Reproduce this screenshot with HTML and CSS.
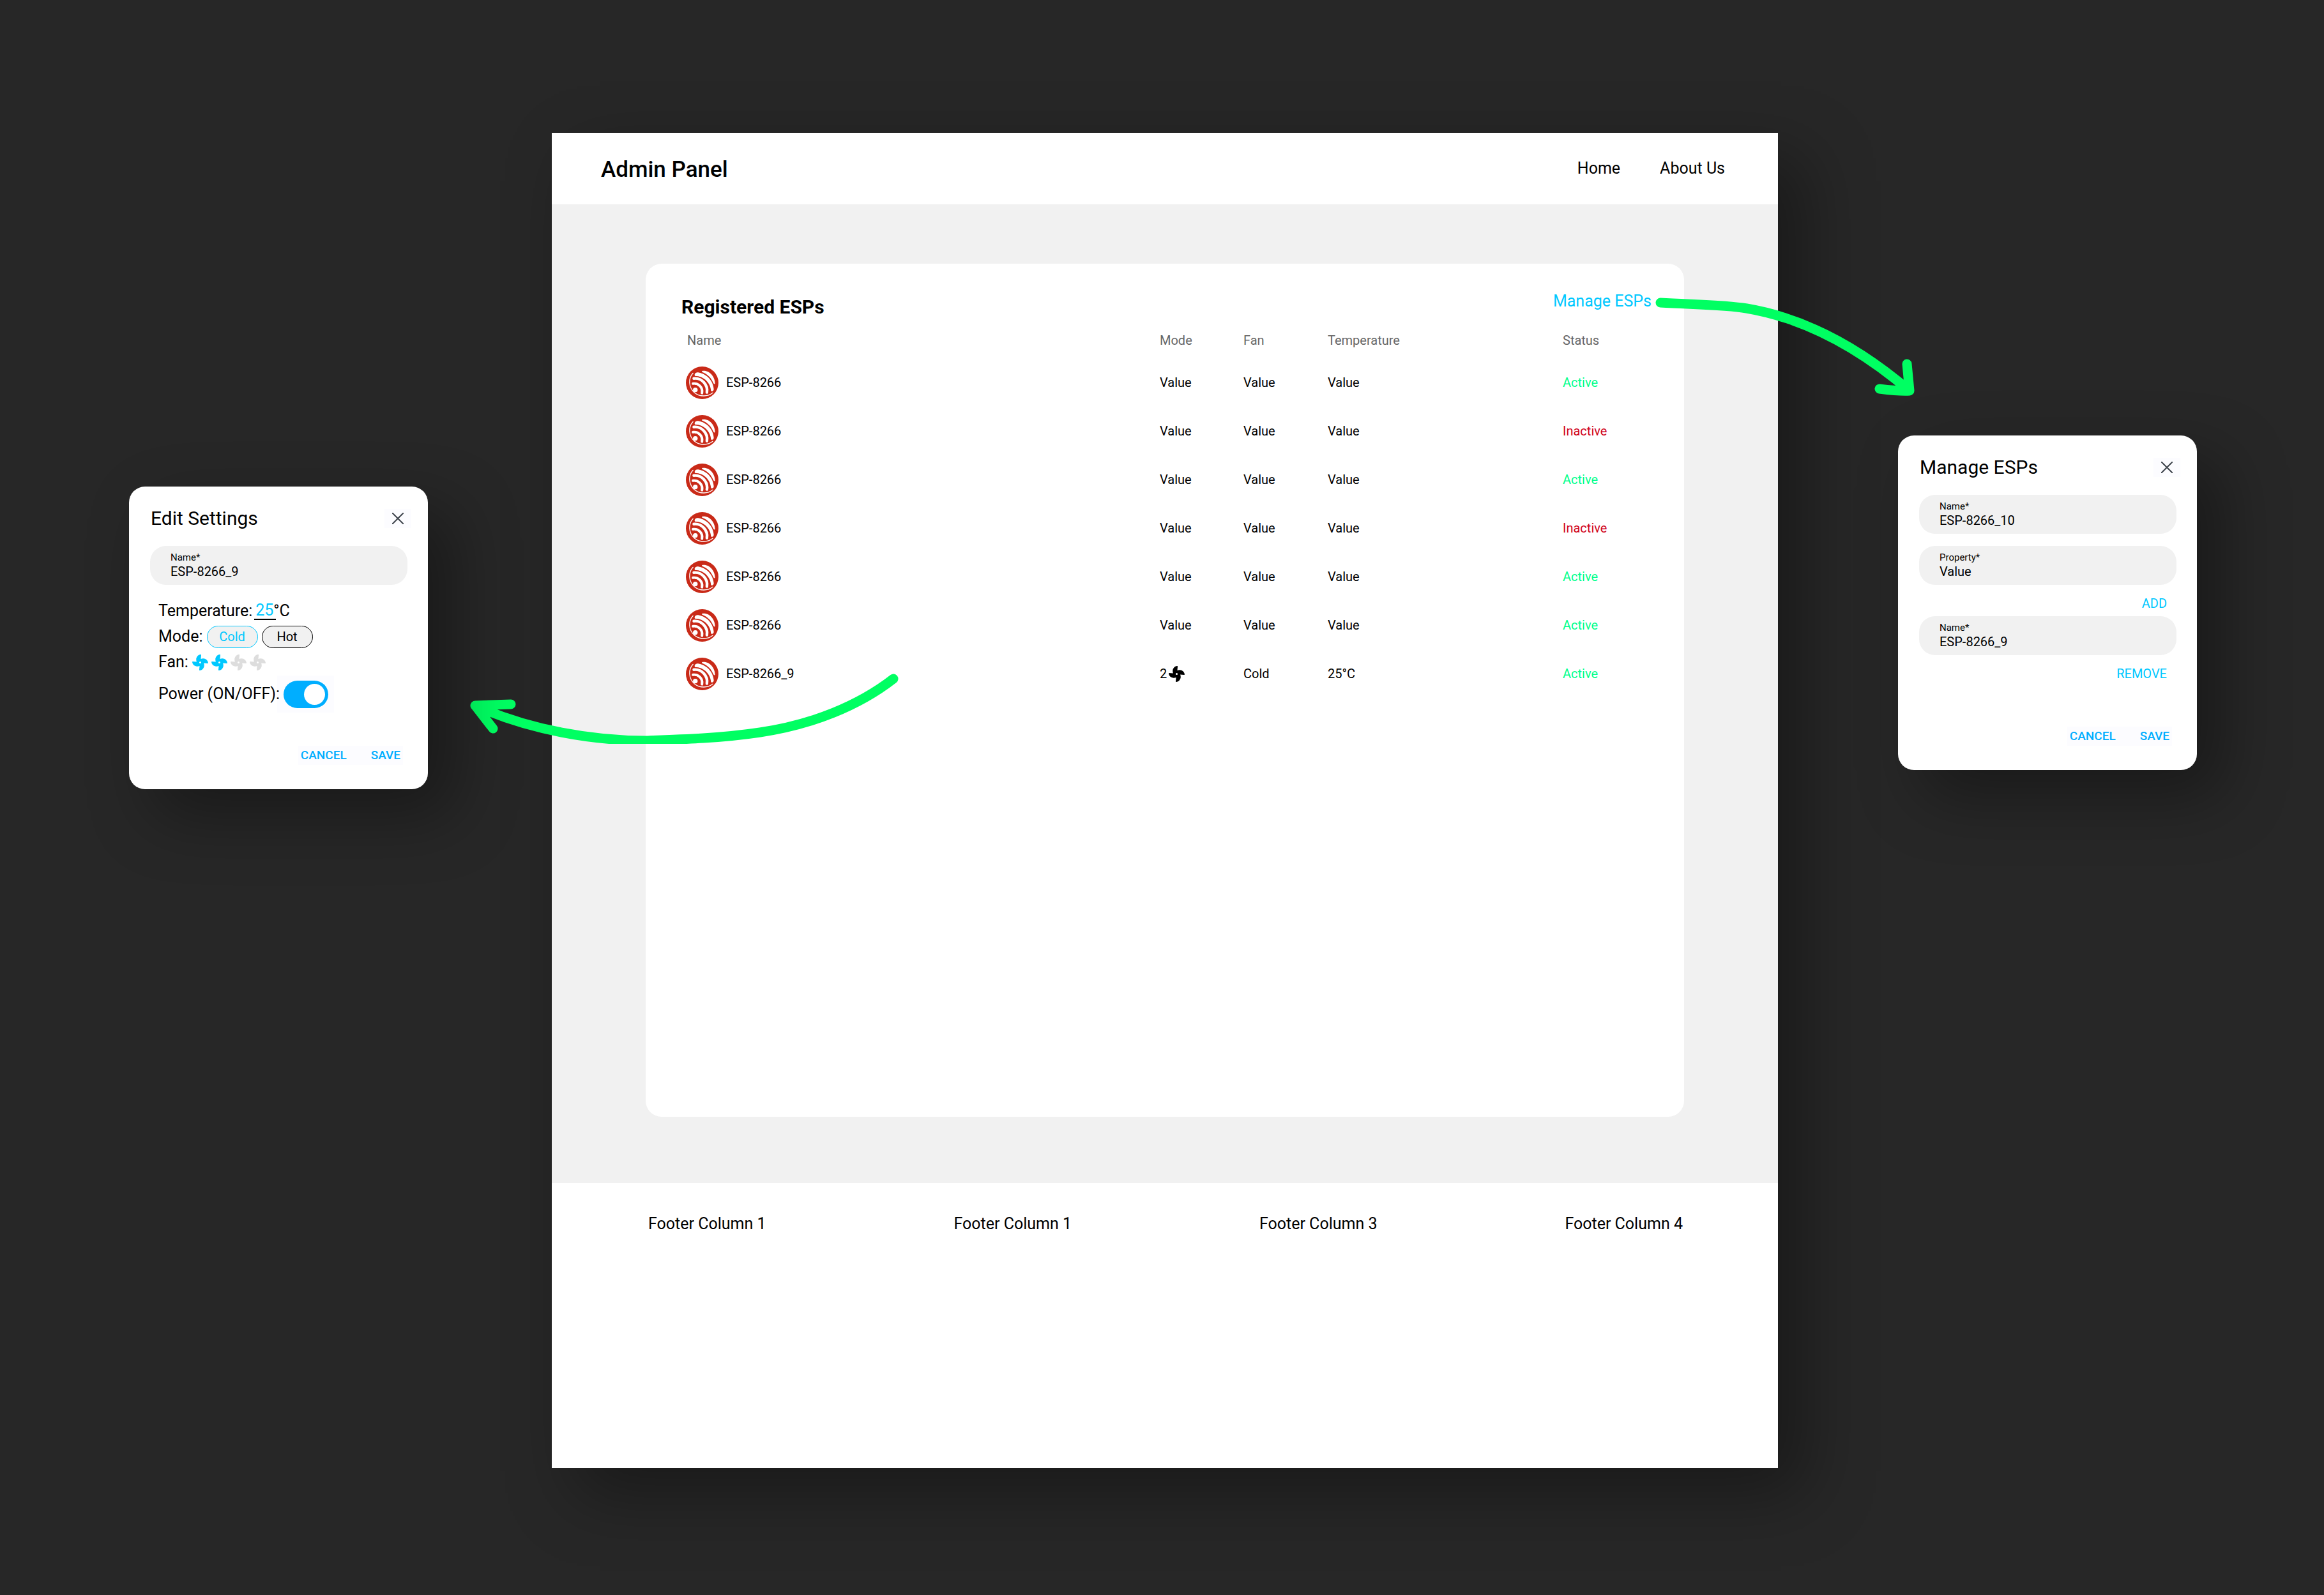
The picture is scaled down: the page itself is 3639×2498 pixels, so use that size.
FILE: index.html
```html
<!DOCTYPE html>
<html lang="en">
<head>
<meta charset="utf-8">
<title>Admin Panel</title>
<link rel="stylesheet" href="styles.css">
</head>
<body>
<svg class="sprite" aria-hidden="true">
  <symbol id="fan" viewBox="0 0 512 512">
    <path fill="currentColor" d="M352.57 128c-28.09 0-54.09 4.52-77.06 12.86l12.41-123.11C289 7.31 279.81-1.18 269.33.13 189.63 10.13 128 77.64 128 159.43c0 28.09 4.52 54.09 12.86 77.06L17.75 224.08C7.31 223-1.18 232.19.13 242.67c10 79.7 77.51 141.33 159.3 141.33 28.09 0 54.09-4.52 77.06-12.86l-12.41 123.11c-1.05 10.43 8.11 18.93 18.59 17.62 79.7-10 141.33-77.51 141.33-159.3 0-28.09-4.52-54.09-12.86-77.06l123.11 12.41c10.44 1.05 18.93-8.11 17.62-18.59-10-79.7-77.51-141.33-159.3-141.33zM256 288a32 32 0 1 1 32-32 32 32 0 0 1-32 32z"/>
  </symbol>
  <symbol id="esp" viewBox="0 0 152 152">
    <circle cx="76" cy="76" r="76" fill="#c92a18"/>
    <g fill="none" stroke="#fff" stroke-linecap="round">
      <path stroke-width="4" d="M33 31C10 54 12 98 40 122C66 143 102 141 125 123"/>
      <path stroke-width="12" d="M33 80C58 76 80 98 75 124"/>
      <path stroke-width="13" d="M37 56C74 52 104 86 98 121"/>
    </g>
    <g fill="#fff">
      <path d="M42 44C38 34 46 26 60 28C98 34 128 68 130 106C130 114 124 118 117 114C116 80 86 44 42 44Z"/>
      <path d="M75 21C106 14 136 44 136 80C132 84 130 80 127 75C118 52 102 36 75 25Z"/>
      <circle cx="44" cy="109" r="11"/>
    </g>
    <path fill="none" stroke="#c92a18" stroke-width="8" stroke-linecap="round" d="M30 92C48 84 66 98 60 124"/>
  </symbol>
  <symbol id="close" viewBox="0 0 18 18">
    <path fill="none" stroke="#3f454d" stroke-width="2" d="M0 0L18 18M18 0L0 18"/>
  </symbol>
</svg>

<div class="canvas">
  <form class="dialog dialog-edit">
    <div class="dialog-head">
      <h2>Edit Settings</h2>
      <button type="button" class="close" aria-label="Close"><svg><use href="#close"/></svg></button>
    </div>
    <div class="field">
      <label for="edit-name">Name*</label>
      <input id="edit-name" type="text" value="ESP-8266_9">
    </div>
    <div class="settings">
      <div class="setting">
        <label for="temp">Temperature:</label>
        <input id="temp" class="temp" type="text" value="25"><span class="unit">°C</span>
      </div>
      <div class="setting">
        <span>Mode:</span>
        <button type="button" class="pill pill-on">Cold</button>
        <button type="button" class="pill">Hot</button>
      </div>
      <div class="setting">
        <span>Fan:</span>
        <div class="fans">
          <button type="button" class="fan fan-on" aria-label="Fan speed 1"><svg><use href="#fan"/></svg></button>
          <button type="button" class="fan fan-on" aria-label="Fan speed 2"><svg><use href="#fan"/></svg></button>
          <button type="button" class="fan" aria-label="Fan speed 3"><svg><use href="#fan"/></svg></button>
          <button type="button" class="fan" aria-label="Fan speed 4"><svg><use href="#fan"/></svg></button>
        </div>
      </div>
      <div class="setting setting-power">
        <label for="power">Power (ON/OFF):</label>
        <span class="switch-box"><input id="power" class="switch" type="checkbox" checked></span>
      </div>
    </div>
    <div class="actions">
      <button type="button">CANCEL</button>
      <button type="button">SAVE</button>
    </div>
  </form>

  <div class="panel">
    <header class="topbar">
      <h1>Admin Panel</h1>
      <nav>
        <a href="#home">Home</a>
        <a href="#about">About Us</a>
      </nav>
    </header>
    <main>
      <section class="card">
        <div class="card-head">
          <h2>Registered ESPs</h2>
          <a href="#manage">Manage ESPs</a>
        </div>
        <table>
          <colgroup><col><col class="col-mode"><col class="col-fan"><col class="col-temp"><col class="col-status"></colgroup>
          <thead>
            <tr><th>Name</th><th>Mode</th><th>Fan</th><th>Temperature</th><th>Status</th></tr>
          </thead>
          <tbody>
            <tr><td><div class="device"><svg><use href="#esp"/></svg>ESP-8266</div></td><td>Value</td><td>Value</td><td>Value</td><td class="active">Active</td></tr>
            <tr><td><div class="device"><svg><use href="#esp"/></svg>ESP-8266</div></td><td>Value</td><td>Value</td><td>Value</td><td class="inactive">Inactive</td></tr>
            <tr><td><div class="device"><svg><use href="#esp"/></svg>ESP-8266</div></td><td>Value</td><td>Value</td><td>Value</td><td class="active">Active</td></tr>
            <tr><td><div class="device"><svg><use href="#esp"/></svg>ESP-8266</div></td><td>Value</td><td>Value</td><td>Value</td><td class="inactive">Inactive</td></tr>
            <tr><td><div class="device"><svg><use href="#esp"/></svg>ESP-8266</div></td><td>Value</td><td>Value</td><td>Value</td><td class="active">Active</td></tr>
            <tr><td><div class="device"><svg><use href="#esp"/></svg>ESP-8266</div></td><td>Value</td><td>Value</td><td>Value</td><td class="active">Active</td></tr>
            <tr><td><div class="device"><svg><use href="#esp"/></svg>ESP-8266_9</div></td><td><div class="speed">2<svg><use href="#fan"/></svg></div></td><td>Cold</td><td>25°C</td><td class="active">Active</td></tr>
          </tbody>
        </table>
      </section>
    </main>
    <footer>
      <span>Footer Column 1</span>
      <span>Footer Column 1</span>
      <span>Footer Column 3</span>
      <span>Footer Column 4</span>
    </footer>
    <svg class="arrow arrow-right" viewBox="2585 460 430 170" aria-hidden="true">
      <path d="M2600 474C2650 477 2700 477 2735 483C2830 499 2915 548 2990 612M2986 570L2990 612Q2975 613 2943 609"/>
    </svg>
    <svg class="arrow arrow-left" viewBox="730 1045 685 120" aria-hidden="true">
      <path d="M1399 1063C1345 1105 1272 1135 1190 1147C1130 1156 1070 1158 1012 1160C930 1160 830 1144 744 1105M800 1103L744 1105L772 1141"/>
    </svg>
  </div>

  <form class="dialog dialog-manage">
    <div class="dialog-head">
      <h2>Manage ESPs</h2>
      <button type="button" class="close" aria-label="Close"><svg><use href="#close"/></svg></button>
    </div>
    <div class="field">
      <label for="new-name">Name*</label>
      <input id="new-name" type="text" value="ESP-8266_10">
    </div>
    <div class="field field-next">
      <label for="new-prop">Property*</label>
      <input id="new-prop" type="text" value="Value">
    </div>
    <div class="row-action"><button type="button">ADD</button></div>
    <div class="field">
      <label for="old-name">Name*</label>
      <input id="old-name" type="text" value="ESP-8266_9">
    </div>
    <div class="row-action"><button type="button">REMOVE</button></div>
    <div class="actions">
      <button type="button">CANCEL</button>
      <button type="button">SAVE</button>
    </div>
  </form>
</div>
</body>
</html>
```
FILE: styles.css
```css
* { box-sizing: border-box; }

body {
  margin: 0;
  background: #272727;
  color: #000;
  font: 400 25px/30px Roboto, sans-serif;
}

h1, h2 { margin: 0; }
a { color: inherit; text-decoration: none; }
button, input { font: inherit; color: inherit; }
button { border: 0; padding: 0; background: none; cursor: pointer; }
svg { display: block; }
.sprite { position: absolute; width: 0; height: 0; }

.canvas {
  display: grid;
  grid-template-columns: 468px 1fr 468px;
  align-items: start;
  min-height: 100vh;
  padding: 208px 199px 199px 202px;
}

/* main panel */
.panel {
  position: relative;
  margin: 0 188px 0 194px;
  background: #fff;
  box-shadow: 40px 40px 100px rgba(0, 0, 0, .35);
}

.topbar {
  display: flex;
  align-items: center;
  justify-content: space-between;
  height: 112px;
  padding: 0 83px 0 77px;
}
.topbar h1 { padding-top: 3px; font-size: 35px; line-height: 42px; font-weight: 500; }
.topbar nav { display: flex; gap: 62px; }

main {
  padding: 93px 147px 104px;
  background: #f1f1f1;
}

.card {
  min-height: 1336px;
  border-radius: 25px;
  background: #fff;
}
.card-head {
  display: flex;
  align-items: flex-start;
  justify-content: space-between;
  padding: 44px 51px 6px 56px;
}
.card-head h2 {
  margin-top: 6px;
  font-size: 30px;
  line-height: 36px;
  font-weight: 700;
}
.card-head a { color: #00c8ff; }

table {
  width: calc(100% - 126px);
  margin: 0 63px;
  border-collapse: collapse;
  table-layout: fixed;
  font-size: 20px;
  line-height: 24px;
}
.col-mode { width: 131px; }
.col-fan { width: 132px; }
.col-temp { width: 368px; }
.col-status { width: 127px; }
th {
  height: 56px;
  padding: 0;
  color: #666;
  font-weight: 400;
  text-align: left;
}
th:first-child { padding-left: 2px; }
td { height: 76px; padding: 0; }
.device { display: flex; align-items: center; gap: 12px; }
.device svg { width: 51px; height: 51px; }
.speed { display: flex; align-items: center; gap: 3px; }
.speed svg { width: 25px; height: 25px; }
.active { color: #00ff8c; }
.inactive { color: #d0021b; }

footer {
  display: flex;
  justify-content: space-between;
  min-height: 446px;
  padding: 49px 149px 0 151px;
}

/* flow arrows drawn over the panel edges */
.arrow { position: absolute; }
.arrow path {
  fill: none;
  stroke: #00ff62;
  stroke-width: 15px;
  stroke-linecap: round;
  stroke-linejoin: round;
}
.arrow-right { top: 252px; right: -231px; width: 430px; height: 170px; }
.arrow-left { top: 837px; left: -134px; width: 685px; height: 120px; }

/* dialogs */
.dialog {
  position: relative;
  z-index: 1;
  padding: 32px 32px 38px 33px;
  border-radius: 25px;
  background: #fff;
  box-shadow: 40px 40px 100px rgba(0, 0, 0, .35);
}
.dialog-edit { margin-top: 554px; }
.dialog-manage { margin-top: 474px; }

.dialog-head {
  display: flex;
  align-items: center;
  justify-content: space-between;
  margin-bottom: 25px;
  padding-left: 1px;
}
.dialog-head h2 { font-size: 30px; line-height: 36px; font-weight: 400; }
.close {
  display: grid;
  place-items: center;
  width: 42px;
  height: 30px;
  margin-right: -6px;
  background: #fcfcff;
}
.close svg { width: 18px; height: 18px; }

.field {
  display: flex;
  flex-direction: column;
  padding: 9px 32px;
  border-radius: 25px;
  background: #f1f1f1;
}
.field-next { margin-top: 19px; }
.field label { font-size: 15px; line-height: 18px; }
.field input {
  width: 100%;
  height: 25px;
  padding: 1px 0 0;
  border: 0;
  background: none;
  font-size: 20px;
  line-height: 24px;
}

.settings { padding: 21px 0 0 13px; }
.setting { display: flex; align-items: center; gap: 6px; height: 40px; }
.temp {
  width: 34px;
  height: 28px;
  margin-left: -3px;
  padding: 0 0 0 2px;
  border: 0;
  border-bottom: 2px solid #000;
  background: none;
  color: #00c8ff;
}
.unit { margin-left: -10px; }
.pill {
  width: 80px;
  height: 35px;
  border: 1px solid #000;
  border-radius: 18px;
  background: #f1f1f1;
  font-size: 20px;
  line-height: 24px;
}
.pill-on { border-color: #00c8ff; color: #00c8ff; }
.fans { display: flex; gap: 5px; }
.fan { color: #ddd; }
.fan-on { color: #00c8ff; }
.fan svg { width: 25px; height: 25px; }

.setting-power { height: 58px; margin-top: 1px; }
.setting-power label { z-index: 1; }
.switch-box {
  display: flex;
  align-items: center;
  height: 58px;
  margin-left: -10px;
  padding: 0 9px 0 10px;
  background: #fcfcff;
}
.switch {
  display: flex;
  align-items: center;
  width: 70px;
  height: 43px;
  margin: 0;
  padding: 0 5px;
  border-radius: 22px;
  background: #00aeff;
  appearance: none;
}
.switch::before {
  content: "";
  width: 33px;
  height: 33px;
  border-radius: 50%;
  background: #fff;
}
.switch:checked { justify-content: flex-end; }

.row-action {
  display: flex;
  justify-content: flex-end;
  padding: 17px 15px 8px 0;
  color: #00c8ff;
  font-size: 20px;
  line-height: 24px;
}
.actions {
  display: flex;
  gap: 38px;
  width: fit-content;
  margin: 52px 7px 0 auto;
  padding: 0 4px;
  background: #fcfcff;
  color: #00aeff;
  font-size: 19px;
  line-height: 30px;
  font-weight: 500;
}
.dialog-manage .actions { margin-top: 63px; }
```
